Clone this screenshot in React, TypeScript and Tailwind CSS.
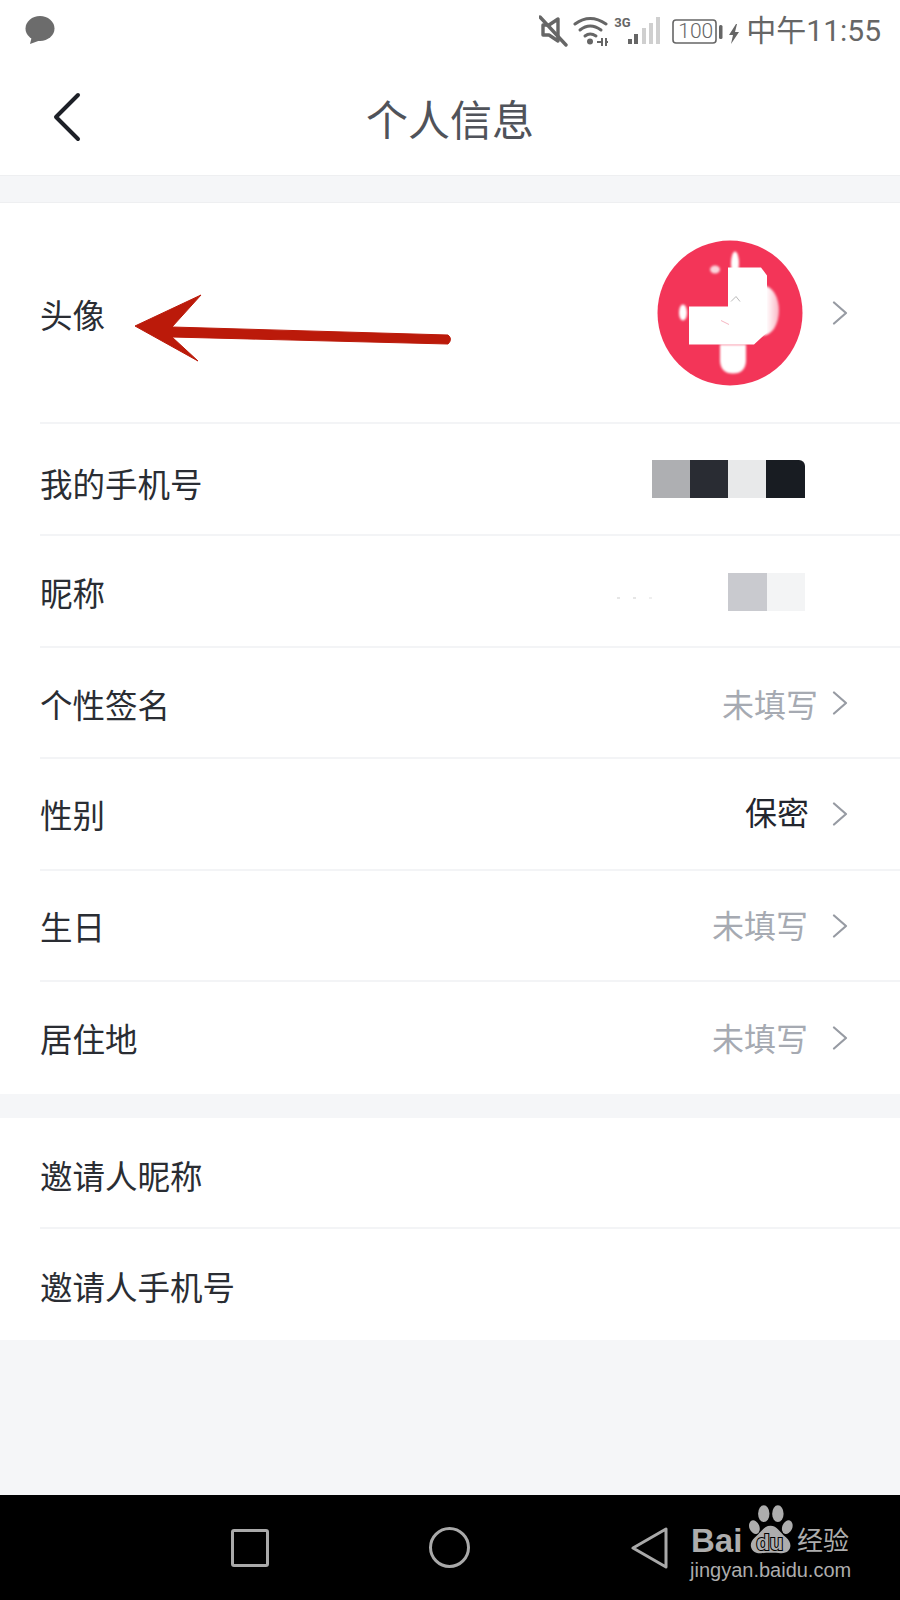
import React from "react";

const CJK = { fontFamily: '"Noto Sans CJK SC", "Noto Sans", sans-serif' };

function Chevron() {
  return (
    <svg width="16" height="24" viewBox="0 0 16 24" className="shrink-0">
      <path d="M2 1.5 L14 12 L2 22.5" fill="none" stroke="#979ba3" strokeWidth="2.2" strokeLinecap="round" strokeLinejoin="round" />
    </svg>
  );
}

function Row({ label, last, h, children, right, labelClass }: { label: string; last?: boolean; h: string; children?: React.ReactNode; right?: string; labelClass?: string }) {
  return (
    <div className={`ml-[40px] flex items-center justify-between ${h} ${last ? "" : "border-b-2 border-[#f3f4f6]"}`}>
      <span className={`text-[32.5px] leading-none text-[#2a2d33] ${labelClass ?? ""}`}>{label}</span>
      <div className={`flex items-center ${right ?? "pr-[52px]"}`}>{children}</div>
    </div>
  );
}

function StatusIcons() {
  return (
    <svg width="203" height="36" viewBox="0 0 203 36" className="shrink-0">
      {/* mute */}
      <g fill="none" stroke="#666" strokeWidth="3.4">
        <path d="M4 12 h6 l9 -6 v22 l-9 -6 h-6 z" strokeLinejoin="round" />
        <path d="M1 4 L27 32" strokeLinecap="round" />
      </g>
      {/* wifi */}
      <g fill="none" stroke="#666" strokeWidth="3" strokeLinecap="round">
        <path d="M36 11 Q51 0 67 11" />
        <path d="M41 17 Q51 9 62 17" />
        <path d="M46 23 Q51 19 57 23" />
      </g>
      <circle cx="51" cy="28.5" r="3" fill="#666" />
      <path d="M58 29 h6 M63 25 v8 M67 25 v8 M66 29 h3" stroke="#666" strokeWidth="2" fill="none" />
      {/* signal */}
      <rect x="89" y="26" width="4" height="5" fill="#666" />
      <rect x="95" y="21" width="4" height="10" fill="#666" />
      <rect x="103" y="15" width="4" height="16" fill="#cfcfcf" />
      <rect x="110" y="10" width="4" height="21" fill="#cfcfcf" />
      <rect x="117" y="4" width="4" height="27" fill="#cfcfcf" />
      {/* battery */}
      <rect x="134" y="7" width="43" height="23" rx="3" fill="none" stroke="#666" strokeWidth="1.6" />
      <rect x="180" y="12" width="3.5" height="14" rx="1.5" fill="#666" />
      <path d="M197 11 L190 22 h4 l-2 9 L200 19 h-4 l2 -8 z" fill="#666" />
    </svg>
  );
}

export default function App() {
  return (
    <div className="relative flex h-[1600px] w-[900px] flex-col overflow-hidden bg-[#f5f6f8]" style={CJK}>
      {/* status bar */}
      <div className="flex h-[60px] shrink-0 items-center justify-between bg-white pl-[25px] pr-[19px]">
        <svg width="30" height="29" viewBox="0 0 30 29" className="mt-[1px]">
          <ellipse cx="15" cy="12.5" rx="14.5" ry="12.5" fill="#6c6c6c" />
          <path d="M7 20 L5 28 L16 24 z" fill="#6c6c6c" />
        </svg>
        <div className="flex items-center pt-[2px]">
          <div className="relative">
            <StatusIcons />
            <span className="absolute left-[139px] top-[8px] text-[21px] leading-[21px] text-[#666]" style={{ fontFamily: "Roboto, sans-serif", fontWeight: 300 }}>100</span>
            <span className="absolute left-[75px] top-[3px] text-[13px] font-bold leading-[13px] text-[#666]" style={{ fontFamily: "Roboto, sans-serif" }}>3G</span>
          </div>
          <span className="ml-[4px] text-[30px] leading-none text-[#666]" style={{ fontFamily: 'Roboto, "Noto Sans CJK SC", sans-serif' }}>中午11:55</span>
        </div>
      </div>

      {/* header */}
      <div className="relative flex h-[116px] shrink-0 items-center justify-center border-b border-[#eeeff1] bg-white">
        <svg width="32" height="52" viewBox="0 0 32 52" className="absolute left-[51px] top-[31px]">
          <path d="M27 4 L5 26 L27 48" fill="none" stroke="#1d2027" strokeWidth="4" strokeLinecap="round" strokeLinejoin="round" />
        </svg>
        <span className="text-[42px] font-normal leading-none text-[#50535a]">个人信息</span>
      </div>

      <div className="h-[27px] shrink-0 border-b border-[#eeeff1]" />

      {/* main section */}
      <div className="shrink-0 bg-white">
        <Row label="头像" h="h-[221px]" labelClass="pt-[4px]">
          <svg width="146" height="146" viewBox="657 240.5 146 146" className="mr-[29px]">
            <defs>
              <filter id="soft" x="-20%" y="-20%" width="140%" height="140%">
                <feGaussianBlur stdDeviation="1" />
              </filter>
              <linearGradient id="lobe" x1="0" x2="1" y1="0" y2="0">
                <stop offset="0.6" stopColor="#ffffff" />
                <stop offset="1" stopColor="#fbb6c4" />
              </linearGradient>
              <clipPath id="av"><circle cx="730" cy="313.5" r="72.5" /></clipPath>
            </defs>
            <circle cx="730" cy="313.5" r="72.5" fill="#f33558" />
            <g clipPath="url(#av)" filter="url(#soft)" fill="#fff">
              <ellipse cx="735" cy="264" rx="4" ry="12" />
              <ellipse cx="715" cy="270" rx="5" ry="4" fill="#fbd5dc" />
              <ellipse cx="763" cy="311" rx="16" ry="25" fill="url(#lobe)" />
              <ellipse cx="683" cy="313" rx="4" ry="8" />
              <path d="M720 345 H746 V360 Q746 374 733 374 Q720 374 720 360 Z" />
            </g>
            <path d="M728 268 H761 L767 276 V333 L754 345 H689 V307 H728 Z" fill="#fff" />
            <path d="M731 302 L736 297 L740 302" fill="none" stroke="#b9b9b9" strokeWidth="1" />
            <path d="M721 321 L729 325" fill="none" stroke="#f6b6c2" strokeWidth="1" />
          </svg>
          <Chevron />
        </Row>
        <Row label="我的手机号" h="h-[112px]" right="pr-[95px]" labelClass="pt-[9px]">
          <div className="flex h-[38px]">
            <div className="w-[38px] bg-[#aeafb2]" />
            <div className="w-[38px] bg-[#292c33]" />
            <div className="w-[38px] bg-[#e8e9ea]" />
            <div className="w-[39px] rounded-tr-[6px] bg-[#181c22]" />
          </div>
        </Row>
        <Row label="昵称" h="h-[112px]" right="pr-[95px]" labelClass="pt-[2px]">
          <div className="mr-[76px] mt-[14px] flex items-end gap-[13px]">
            <div className="h-[2px] w-[3px] bg-[#e6e6e6]" />
            <div className="h-[2px] w-[3px] bg-[#e6e6e6]" />
            <div className="h-[2px] w-[3px] bg-[#efefef]" />
          </div>
          <div className="mt-[2px] flex h-[38px]">
            <div className="w-[39px] bg-[#c9cacf]" />
            <div className="w-[38px] bg-[#f3f4f5]" />
          </div>
        </Row>
        <Row label="个性签名" h="h-[111px]" labelClass="pt-[4px]">
          <span className="mr-[14px] text-[32px] leading-none text-[#a6aab2]">未填写</span>
          <Chevron />
        </Row>
        <Row label="性别" h="h-[112px]">
          <span className="mb-[6px] mr-[23px] text-[32px] leading-none text-[#23262e]">保密</span>
          <Chevron />
        </Row>
        <Row label="生日" h="h-[111px]" labelClass="pt-[2px]">
          <span className="mb-[3px] mr-[24px] text-[32px] leading-none text-[#a6aab2]">未填写</span>
          <Chevron />
        </Row>
        <Row label="居住地" h="h-[112px]" last>
          <span className="mb-[3px] mr-[24px] text-[32px] leading-none text-[#a6aab2]">未填写</span>
          <Chevron />
        </Row>
      </div>

      <div className="h-[24px] shrink-0" />

      <div className="shrink-0 bg-white">
        <Row label="邀请人昵称" h="h-[111px]" labelClass="pt-[5px]" />
        <Row label="邀请人手机号" h="h-[111px]" labelClass="pt-[3px]" last />
      </div>

      <div className="flex-1" />

      {/* nav bar */}
      <div className="relative flex h-[105px] shrink-0 items-center bg-black pl-[231px]">
        <div className="h-[38px] w-[38px] rounded-[3px] border-[3px] border-[#a9a9a9]" />
        <div className="ml-[160px] h-[41px] w-[41px] rounded-full border-[3px] border-[#a9a9a9]" />
        <svg width="38" height="42" viewBox="0 0 38 42" className="ml-[161px]">
          <path d="M35 2 V40 L2 21 Z" fill="none" stroke="#a9a9a9" strokeWidth="3" strokeLinejoin="round" />
        </svg>

        {/* Baidu watermark */}
        <div className="absolute left-[690px] top-[8px] h-[85px] w-[165px] text-[#adadad]">
          <span className="absolute left-[1px] top-[21px] text-[33px] font-bold leading-[34px]" style={{ fontFamily: '"Liberation Sans", sans-serif' }}>Bai</span>
          <svg width="47" height="52" viewBox="200 10 140 155" className="absolute left-[57px] top-0">
            <g fill="#adadad">
              <ellipse cx="222" cy="82" rx="15" ry="21" transform="rotate(-22 222 82)" />
              <ellipse cx="250" cy="42" rx="17" ry="25" />
              <ellipse cx="292" cy="42" rx="17" ry="25" />
              <ellipse cx="320" cy="82" rx="15" ry="21" transform="rotate(22 320 82)" />
              <path d="M270 78 C290 78 296 96 316 112 C340 132 330 162 300 160 C285 158 258 158 242 160 C212 162 200 132 224 112 C244 96 250 78 270 78 Z" />
            </g>
            <text x="268" y="151" textAnchor="middle" fontSize="66" fontWeight="700" fill="#adadad" stroke="#000" strokeWidth="6" paintOrder="stroke" fontFamily="Liberation Sans, sans-serif">du</text>
          </svg>
          <span className="absolute left-[107px] top-[21px] text-[26px] font-normal leading-[30px]">经验</span>
          <span className="absolute left-0 top-[56px] text-[20px] leading-[22px]" style={{ fontFamily: '"Liberation Sans", sans-serif' }}>jingyan.baidu.com</span>
        </div>
      </div>

      {/* annotation arrow */}
      <svg width="900" height="120" viewBox="0 280 900 120" className="absolute left-0 top-[280px]">
        <path d="M135 326 L201 295 L172 327 L448 335 Q453 339 448 344 L172 337 L198 361 Z" fill="#bb1a0a" stroke="#bb1a0a" strokeWidth="1" strokeLinejoin="round" />
      </svg>
    </div>
  );
}
